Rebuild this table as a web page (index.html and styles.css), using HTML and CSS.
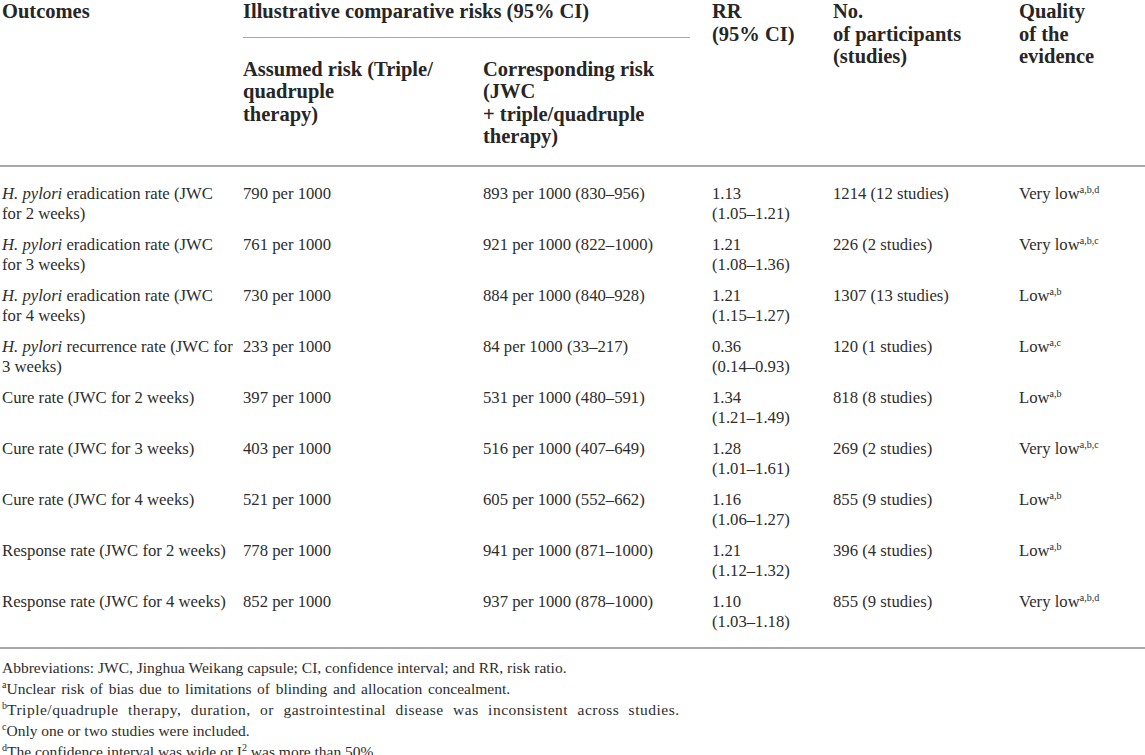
FILE: index.html
```html
<!DOCTYPE html>
<html lang="en">
<head>
  <meta charset="UTF-8" />
  <meta name="viewport" content="width=device-width, initial-scale=1.0"/>
  <title>Summary of findings - JWC</title>
  <link rel="stylesheet" href="styles.css">
</head>
<body>
  <table class="sof">
    <colgroup>
      <col class="c-outcome">
      <col class="c-assumed">
      <col class="c-corr">
      <col class="c-rr">
      <col class="c-part">
      <col class="c-quality">
    </colgroup>
    <thead>
      <tr>
        <th rowspan="2" class="first">Outcomes</th>
        <th colspan="2" class="group"><div class="group-title">Illustrative comparative risks (95% CI)</div></th>
        <th rowspan="2">RR<br>(95% CI)</th>
        <th rowspan="2">No.<br>of participants<br>(studies)</th>
        <th rowspan="2">Quality<br>of the<br>evidence</th>
      </tr>
      <tr>
        <th class="sub">Assumed risk (Triple/<br>quadruple<br>therapy)</th>
        <th class="sub">Corresponding risk<br>(JWC<br>+ triple/quadruple<br>therapy)</th>
      </tr>
    </thead>
    <tbody>
      <tr>
        <td class="first"><i>H. pylori</i> eradication rate (JWC<br>for 2 weeks)</td>
        <td>790 per 1000</td>
        <td>893 per 1000 (830–956)</td>
        <td>1.13<br>(1.05–1.21)</td>
        <td>1214 (12 studies)</td>
        <td>Very low<sup>a,b,d</sup></td>
      </tr>
      <tr>
        <td class="first"><i>H. pylori</i> eradication rate (JWC<br>for 3 weeks)</td>
        <td>761 per 1000</td>
        <td>921 per 1000 (822–1000)</td>
        <td>1.21<br>(1.08–1.36)</td>
        <td>226 (2 studies)</td>
        <td>Very low<sup>a,b,c</sup></td>
      </tr>
      <tr>
        <td class="first"><i>H. pylori</i> eradication rate (JWC<br>for 4 weeks)</td>
        <td>730 per 1000</td>
        <td>884 per 1000 (840–928)</td>
        <td>1.21<br>(1.15–1.27)</td>
        <td>1307 (13 studies)</td>
        <td>Low<sup>a,b</sup></td>
      </tr>
      <tr>
        <td class="first"><i>H. pylori</i> recurrence rate (JWC for<br>3 weeks)</td>
        <td>233 per 1000</td>
        <td>84 per 1000 (33–217)</td>
        <td>0.36<br>(0.14–0.93)</td>
        <td>120 (1 studies)</td>
        <td>Low<sup>a,c</sup></td>
      </tr>
      <tr>
        <td class="first">Cure rate (JWC for 2 weeks)</td>
        <td>397 per 1000</td>
        <td>531 per 1000 (480–591)</td>
        <td>1.34<br>(1.21–1.49)</td>
        <td>818 (8 studies)</td>
        <td>Low<sup>a,b</sup></td>
      </tr>
      <tr>
        <td class="first">Cure rate (JWC for 3 weeks)</td>
        <td>403 per 1000</td>
        <td>516 per 1000 (407–649)</td>
        <td>1.28<br>(1.01–1.61)</td>
        <td>269 (2 studies)</td>
        <td>Very low<sup>a,b,c</sup></td>
      </tr>
      <tr>
        <td class="first">Cure rate (JWC for 4 weeks)</td>
        <td>521 per 1000</td>
        <td>605 per 1000 (552–662)</td>
        <td>1.16<br>(1.06–1.27)</td>
        <td>855 (9 studies)</td>
        <td>Low<sup>a,b</sup></td>
      </tr>
      <tr>
        <td class="first">Response rate (JWC for 2 weeks)</td>
        <td>778 per 1000</td>
        <td>941 per 1000 (871–1000)</td>
        <td>1.21<br>(1.12–1.32)</td>
        <td>396 (4 studies)</td>
        <td>Low<sup>a,b</sup></td>
      </tr>
      <tr>
        <td class="first">Response rate (JWC for 4 weeks)</td>
        <td>852 per 1000</td>
        <td>937 per 1000 (878–1000)</td>
        <td>1.10<br>(1.03–1.18)</td>
        <td>855 (9 studies)</td>
        <td>Very low<sup>a,b,d</sup></td>
      </tr>
    </tbody>
  </table>

  <div class="notes">
    <p>Abbreviations: JWC, Jinghua Weikang capsule; CI, confidence interval; and RR, risk ratio.</p>
    <p class="loose"><sup>a</sup>Unclear risk of bias due to limitations of blinding and allocation concealment.</p>
    <p class="wide"><sup>b</sup>Triple/quadruple therapy, duration, or gastrointestinal disease was inconsistent across studies.</p>
    <p><sup>c</sup>Only one or two studies were included.</p>
    <p><sup>d</sup>The confidence interval was wide or I<sup>2</sup> was more than 50%.</p>
  </div>
</body>
</html>
```

FILE: styles.css
```css
body {
  font-family: "Liberation Serif", "Times New Roman", serif;
  margin: 0;
  padding: 0;
  background-color: white;
  color: #2d2d2d;
}

.sof {
  width: 1145px;
  table-layout: fixed;
  border-collapse: collapse;
}

.c-outcome { width: 243px; }
.c-assumed { width: 240px; }
.c-corr { width: 229px; }
.c-rr { width: 121px; }
.c-part { width: 186px; }
.c-quality { width: 126px; }

/* header */
.sof thead {
  border-bottom: 2px solid #a8a8a8;
}

.sof th {
  font-size: 20.5px;
  line-height: 22.5px;
  font-weight: bold;
  color: #262626;
  text-align: left;
  vertical-align: top;
  padding: 0 6px 0 0;
}

.sof th.first,
.sof td.first {
  padding-left: 2px;
}

.sof th.group {
  padding-right: 22px;
}

.group-title {
  padding-bottom: 14px;
  border-bottom: 1.5px solid #a8a8a8;
}

.sof th.sub {
  padding-top: 20px;
  padding-bottom: 17px;
}

/* body rows */
.sof td {
  font-size: 16.7px;
  line-height: 20.5px;
  vertical-align: top;
  padding: 5px 6px 5px 0;
  white-space: nowrap;
}

.sof tbody tr:first-child td {
  padding-top: 17px;
}

.sof tbody tr:last-child td {
  padding-bottom: 14px;
}

.sof tbody {
  border-bottom: 2px solid #a8a8a8;
}

sup {
  font-size: 10px;
  line-height: 0;
  vertical-align: 6px;
}

/* footnotes */
.notes {
  padding: 8px 0 0 2px;
}

.notes p {
  margin: 0;
  font-size: 15.5px;
  line-height: 21px;
}

.notes p.loose {
  word-spacing: 1.8px;
}

.notes p.wide {
  word-spacing: 5px;
  letter-spacing: 0.5px;
}

.notes sup {
  font-size: 10px;
  vertical-align: 6px;
  letter-spacing: 0;
}
```
